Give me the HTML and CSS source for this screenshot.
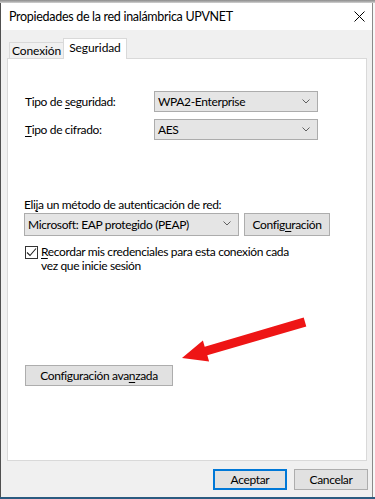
FILE: index.html
```html
<!DOCTYPE html>
<html lang="es">
<head>
<meta charset="utf-8">
<title>Propiedades de la red inalámbrica UPVNET</title>
<link rel="stylesheet" href="styles.css">
</head>
<body>
<div class="screen">
  <div class="behind"></div>
  <div class="window">
    <div class="titlebar">
      <span class="title">Propiedades de la red inalámbrica UPVNET</span>
      <svg class="close" width="11" height="11" viewBox="0 0 11 11"><path d="M0.5 0.5 L10.5 10.5 M10.5 0.5 L0.5 10.5" stroke="#000" stroke-width="1" fill="none"/></svg>
    </div>
    <div class="client">
      <div class="tabs">
        <div class="tab">Conexión</div>
        <div class="tab active">Seguridad</div>
      </div>
      <div class="panel">
        <div class="row first">
          <span class="label">Tipo de <u>s</u>eguridad:</span>
          <div class="select wide">WPA2-Enterprise<svg class="chev" width="8" height="5" viewBox="0 0 8 5"><polyline points="0.5,0.5 4,4 7.5,0.5" fill="none" stroke="#606060" stroke-width="1"/></svg></div>
        </div>
        <div class="row second">
          <span class="label"><u>T</u>ipo de cifrado:</span>
          <div class="select wide">AES<svg class="chev" width="8" height="5" viewBox="0 0 8 5"><polyline points="0.5,0.5 4,4 7.5,0.5" fill="none" stroke="#606060" stroke-width="1"/></svg></div>
        </div>
        <div class="auth-label">Eli<u>j</u>a un método de autenticación de red:</div>
        <div class="auth-row">
          <div class="select method">Microsoft: EAP protegido (PEAP)<svg class="chev" width="8" height="5" viewBox="0 0 8 5"><polyline points="0.5,0.5 4,4 7.5,0.5" fill="none" stroke="#606060" stroke-width="1"/></svg></div>
          <div class="btn config">Config<u>u</u>ración</div>
        </div>
        <div class="check-row">
          <span class="checkbox"><svg width="11" height="11" viewBox="0 0 11 11"><polyline points="1,5.5 4,8.5 10,1.5" fill="none" stroke="#222" stroke-width="1.1"/></svg></span>
          <span class="check-text"><u>R</u>ecordar mis credenciales para esta conexión cada<br>vez que inicie sesión</span>
        </div>
        <div class="btn advanced">Configuración ava<u>n</u>zada</div>
      </div>
      <div class="footer">
        <div class="btn default">Aceptar</div>
        <div class="btn">Cancelar</div>
      </div>
    </div>
  </div>
  <div class="taskline"></div>
  <svg class="arrow" width="375" height="499" viewBox="0 0 375 499">
    <polygon points="303.7,317.5 204.7,346.7 202.9,340.5 182,358 209.1,361.5 207.3,355.3 306.3,326.5" fill="#ee1515"/>
  </svg>
</div>
</body>
</html>
```
FILE: styles.css
```css
* { box-sizing: border-box; }
html, body { margin: 0; padding: 0; }
body {
  font-family: "Lato", "Noto Sans", sans-serif;
  font-size: 12px;
  letter-spacing: -0.35px;
  color: #000;
  background: #f7f7f7;
}
u { text-decoration-thickness: 1px; text-underline-offset: 2px; }
.screen {
  position: relative;
  width: 375px;
  height: 499px;
  overflow: hidden;
  background: #f7f7f7;
}
.behind {
  height: 3px;
  background: linear-gradient(#8c8c8c, #b5b5b5 66%, #d5d5d5);
}
.window {
  width: 373px;
  height: 494px;
  display: flex;
  flex-direction: column;
  border-left: 1px solid #505050;
  border-right: 1px solid #8a8a8a;
}
.titlebar {
  height: 27px;
  background: #fff;
  display: flex;
  align-items: center;
  justify-content: space-between;
  padding: 0 7px 0 8px;
}
.title { font-size: 12.5px; letter-spacing: -0.3px; }
.close { display: block; }
.client {
  flex: 1;
  background: #f0f0f0;
  padding: 8px 5px 0 6px;
  display: flex;
  flex-direction: column;
}
.tabs {
  display: flex;
  align-items: flex-end;
  height: 20px;
  padding-left: 2px;
  position: relative;
  z-index: 1;
}
.tab {
  height: 16px;
  width: 55px;
  border: 1px solid #d9d9d9;
  border-bottom: none;
  background: #f0f0f0;
  display: flex;
  align-items: center;
  justify-content: center;
  line-height: 1;
  padding-top: 1px;
  letter-spacing: -0.1px;
}
.tab.active {
  height: 21px;
  width: 64px;
  margin-bottom: -1px;
  margin-left: -1px;
  background: #fff;
  padding-top: 0;
  padding-bottom: 3px;
}
.panel {
  height: 403px;
  background: #fff;
  border: 1px solid #d9d9d9;
  padding: 32px 0 0 16px;
  display: flex;
  flex-direction: column;
  align-items: flex-start;
}
.row { display: flex; align-items: center; padding-left: 1px; }
.row.second { margin-top: 7px; }
.label { width: 129px; }
.select {
  position: relative;
  height: 21px;
  background: #e5e5e5;
  border: 1px solid #acacac;
  display: flex;
  align-items: center;
  padding-left: 3px;
  white-space: nowrap;
}
.select.wide { width: 164px; }
.chev { position: absolute; right: 7px; top: 7px; }
.auth-label { margin-top: 57px; line-height: 16px; height: 16px; }
.auth-row { display: flex; gap: 5px; }
.select.method { width: 215px; height: 23px; }
.btn {
  height: 21px;
  background: #e1e1e1;
  border: 1px solid #adadad;
  display: flex;
  align-items: center;
  justify-content: center;
  white-space: nowrap;
}
.btn.config { width: 86px; height: 23px; }
.check-row { display: flex; align-items: flex-start; margin-top: 10px; padding-left: 1px; }
.checkbox {
  flex: none;
  width: 13px;
  height: 13px;
  border: 1px solid #333;
  background: #fff;
  display: flex;
  align-items: center;
  justify-content: center;
}
.checkbox svg { display: block; }
.check-text { margin-left: 3px; line-height: 14px; margin-top: -1px; }
.btn.advanced { width: 148px; margin-top: 92px; margin-left: 1px; }
.footer {
  display: flex;
  justify-content: flex-end;
  gap: 7px;
  margin-top: 8px;
  margin-right: -1px;
}
.footer .btn { width: 74px; }
.btn.default { border-color: #0078d7; box-shadow: inset 0 0 0 1px #0078d7; }
.taskline { height: 2px; background: #2b5b80; }
.arrow { position: absolute; left: 0; top: 0; pointer-events: none; }
```
